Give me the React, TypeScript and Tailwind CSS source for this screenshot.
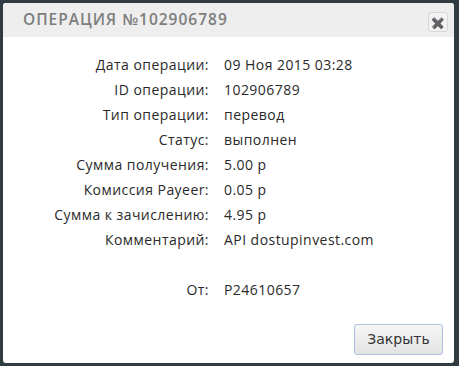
const rows: [string, string][] = [
  ["Дата операции:", "09 Ноя 2015 03:28"],
  ["ID операции:", "102906789"],
  ["Тип операции:", "перевод"],
  ["Статус:", "выполнен"],
  ["Сумма получения:", "5.00 р"],
  ["Комиссия Payeer:", "0.05 р"],
  ["Сумма к зачислению:", "4.95 р"],
  ["Комментарий:", "API dostupinvest.com"],
  ["", ""],
  ["От:", "P24610657"],
]

const App = () => {
  return (
    <div className="w-[459px] h-[366px] bg-[#2f3d42] p-[3px] pr-[5px]">
      <div className="flex flex-col h-full bg-white rounded-[3px] overflow-hidden">
        {/* header */}
        <div className="flex items-center justify-between h-[34px] bg-[#eeeeee] pl-[20px] pr-[6px]">
          <h2 className="text-[15.5px] font-semibold tracking-[1px] text-[#7d7d7d] font-['Open_Sans',sans-serif]">
            ОПЕРАЦИЯ №102906789
          </h2>
          <button className="flex items-center justify-center w-[20px] h-[20px] mt-[4px] rounded-[3px] border border-[#d6d6d6] bg-[#f2f2f2] text-[#8a8a8a] text-[11px] leading-none">
            ✖
          </button>
        </div>

        {/* details */}
        <div className="flex flex-col pt-[15px] font-['Open_Sans',sans-serif] text-[14px] tracking-[0.45px] text-[#2a2a2a]">
          {rows.map(([label, value], i) => (
            <div key={i} className="flex h-[25px] items-center">
              <div className="w-[206px] text-right">{label}</div>
              <div className="pl-[15px]">{value}</div>
            </div>
          ))}
        </div>

        {/* footer */}
        <div className="flex flex-1 justify-end items-end pb-[8px] pr-[11px]">
          <button className="w-[89px] h-[31px] rounded-[3px] border border-[#a9c1e3] bg-gradient-to-b from-[#f6f6f6] to-[#e3e3e3] text-[14px] text-[#333333] font-['DejaVu_Sans',sans-serif]">
            Закрыть
          </button>
        </div>
      </div>
    </div>
  )
}

export default App
